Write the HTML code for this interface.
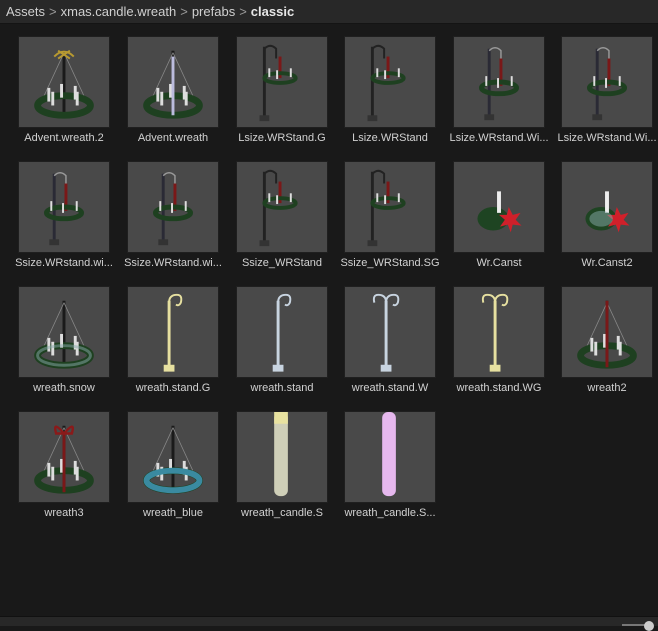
<!DOCTYPE html>
<html><head><meta charset="utf-8"><style>
*{margin:0;padding:0;box-sizing:border-box}
body{width:658px;height:626px;background:#191919;overflow:hidden;position:relative;font-family:"Liberation Sans",sans-serif}
.bar{position:absolute;left:0;top:0;width:658px;height:24px;background:#282828;border-bottom:1px solid #141414;color:#d0d0d0;font-size:13px;line-height:23px;padding-left:6px;white-space:nowrap}
.bar .s{color:#9a9a9a;margin:0 4px}
.bar b{color:#e6e6e6}
.it{position:absolute;width:92px}
.th{width:92px;height:92px;background:#494949;border:1px solid #1f1f1f;display:block}
.lb{position:absolute;top:96px;left:-10px;width:112px;text-align:center;color:#d2d2d2;font-size:11px;white-space:nowrap}
.bot{position:absolute;left:0;top:616px;width:658px;height:10px;background:#282828;border-top:1px solid #111}
</style></head><body>
<div class="bar">Assets<span class="s">&gt;</span>xmas.candle.wreath<span class="s">&gt;</span>prefabs<span class="s">&gt;</span><b>classic</b></div>

<svg width="0" height="0" style="position:absolute"><defs>
<g id="wr"><line x1="46" y1="14" x2="46" y2="82" stroke="#1a1a1a" stroke-width="3"/><line x1="46" y1="16" x2="22" y2="68" stroke="#888" stroke-width="0.8"/><line x1="46" y1="16" x2="70" y2="68" stroke="#888" stroke-width="0.8"/><ellipse cx="46" cy="70" rx="27" ry="10" fill="none" stroke="#1e4020" stroke-width="7"/><rect x="29" y="52" width="3" height="14" fill="#ddd"/><rect x="33" y="56" width="3" height="14" fill="#ddd"/><rect x="56" y="50" width="3" height="14" fill="#ddd"/><rect x="58" y="56" width="3" height="14" fill="#ddd"/><rect x="42" y="48" width="3" height="14" fill="#ddd"/></g>
<g id="ls"><line x1="28" y1="10" x2="28" y2="84" stroke="#222" stroke-width="3"/><path d="M28 12 q6 -6 12 0 v10" fill="none" stroke="#222" stroke-width="2"/><rect x="23" y="80" width="10" height="6" fill="#333"/><line x1="44" y1="20" x2="44" y2="42" stroke="#7a1818" stroke-width="3"/><ellipse cx="44" cy="42" rx="16" ry="5" fill="none" stroke="#1e4020" stroke-width="4"/><rect x="32" y="32" width="2" height="9" fill="#ddd"/><rect x="54" y="32" width="2" height="9" fill="#ddd"/><rect x="40" y="34" width="2" height="9" fill="#ddd"/></g>
<g id="ss"><line x1="36" y1="12" x2="36" y2="82" stroke="#2a2a35" stroke-width="3"/><path d="M36 14 q6 -6 12 0 v10" fill="none" stroke="#999" stroke-width="1.5"/><rect x="31" y="79" width="10" height="6" fill="#333"/><line x1="48" y1="22" x2="48" y2="50" stroke="#7a1818" stroke-width="3"/><ellipse cx="46" cy="52" rx="18" ry="6" fill="none" stroke="#1e4020" stroke-width="5"/><rect x="32" y="40" width="2" height="10" fill="#ddd"/><rect x="58" y="40" width="2" height="10" fill="#ddd"/><rect x="44" y="42" width="2" height="10" fill="#ddd"/></g>
<g id="cs"><ellipse cx="40" cy="58" rx="16" ry="12" fill="#1e4422"/><rect x="44" y="30" width="4" height="22" fill="#eee"/><path d="M56 46 l4 8 8 -2 -5 7 6 6 -9 -1 -2 8 -3 -8 -8 2 5 -7 -6 -5 8 0z" fill="#d0202a"/></g>
<g id="st"><line x1="42" y1="14" x2="42" y2="84" stroke-width="3"/><path d="M42 16 q0 -8 8 -8 q6 0 4 8 q-2 4 -5 2" fill="none" stroke-width="2"/><rect x="37" y="80" width="10" height="6"/></g>
</defs></svg>

<div class="it" style="left:18px;top:36px"><svg class="th" viewBox="0 0 92 92"><use href="#wr"/><path d="M36 20 q10 -10 20 0 M40 14 l12 8 M52 14 l-12 8" stroke="#b89a30" fill="none" stroke-width="2"/></svg><div class="lb">Advent.wreath.2</div></div>
<div class="it" style="left:127px;top:36px"><svg class="th" viewBox="0 0 92 92"><use href="#wr"/><line x1="46" y1="20" x2="46" y2="80" stroke="#bbd" stroke-width="3"/></svg><div class="lb">Advent.wreath</div></div>
<div class="it" style="left:236px;top:36px"><svg class="th" viewBox="0 0 92 92"><use href="#ls"/></svg><div class="lb">Lsize.WRStand.G</div></div>
<div class="it" style="left:344px;top:36px"><svg class="th" viewBox="0 0 92 92"><use href="#ls"/></svg><div class="lb">Lsize.WRStand</div></div>
<div class="it" style="left:453px;top:36px"><svg class="th" viewBox="0 0 92 92"><use href="#ss"/></svg><div class="lb">Lsize.WRstand.Wi...</div></div>
<div class="it" style="left:561px;top:36px"><svg class="th" viewBox="0 0 92 92"><use href="#ss"/></svg><div class="lb">Lsize.WRstand.Wi...</div></div>

<div class="it" style="left:18px;top:161px"><svg class="th" viewBox="0 0 92 92"><use href="#ss"/></svg><div class="lb">Ssize.WRstand.wi...</div></div>
<div class="it" style="left:127px;top:161px"><svg class="th" viewBox="0 0 92 92"><use href="#ss"/></svg><div class="lb">Ssize.WRstand.wi...</div></div>
<div class="it" style="left:236px;top:161px"><svg class="th" viewBox="0 0 92 92"><use href="#ls"/></svg><div class="lb">Ssize_WRStand</div></div>
<div class="it" style="left:344px;top:161px"><svg class="th" viewBox="0 0 92 92"><use href="#ls"/></svg><div class="lb">Ssize_WRStand.SG</div></div>
<div class="it" style="left:453px;top:161px"><svg class="th" viewBox="0 0 92 92"><use href="#cs"/></svg><div class="lb">Wr.Canst</div></div>
<div class="it" style="left:561px;top:161px"><svg class="th" viewBox="0 0 92 92"><use href="#cs"/><ellipse cx="40" cy="58" rx="12" ry="8" fill="#8aa" opacity=".5"/></svg><div class="lb">Wr.Canst2</div></div>

<div class="it" style="left:18px;top:286px"><svg class="th" viewBox="0 0 92 92"><use href="#wr"/><ellipse cx="46" cy="70" rx="27" ry="10" fill="none" stroke="#8aa" stroke-width="3" opacity=".5"/></svg><div class="lb">wreath.snow</div></div>
<div class="it" style="left:127px;top:286px"><svg class="th" viewBox="0 0 92 92"><use href="#st" stroke="#e6e0a0" fill="#e6e0a0"/></svg><div class="lb">wreath.stand.G</div></div>
<div class="it" style="left:236px;top:286px"><svg class="th" viewBox="0 0 92 92"><use href="#st" stroke="#c8d4e0" fill="#c8d4e0"/></svg><div class="lb">wreath.stand</div></div>
<div class="it" style="left:344px;top:286px"><svg class="th" viewBox="0 0 92 92"><use href="#st" stroke="#c8d4e0" fill="#c8d4e0"/><path d="M42 16 q0 -8 -8 -8 q-6 0 -4 8" fill="none" stroke="#c8d4e0" stroke-width="2"/></svg><div class="lb">wreath.stand.W</div></div>
<div class="it" style="left:453px;top:286px"><svg class="th" viewBox="0 0 92 92"><use href="#st" stroke="#e6e0a0" fill="#e6e0a0"/><path d="M42 16 q0 -8 -8 -8 q-6 0 -4 8" fill="none" stroke="#e6e0a0" stroke-width="2"/></svg><div class="lb">wreath.stand.WG</div></div>
<div class="it" style="left:561px;top:286px"><svg class="th" viewBox="0 0 92 92"><use href="#wr"/><line x1="46" y1="14" x2="46" y2="82" stroke="#7a1818" stroke-width="3"/></svg><div class="lb">wreath2</div></div>

<div class="it" style="left:18px;top:411px"><svg class="th" viewBox="0 0 92 92"><use href="#wr"/><line x1="46" y1="20" x2="46" y2="82" stroke="#7a1818" stroke-width="3"/><path d="M46 22 q-12 -14 -8 0 z M46 22 q12 -14 8 0 z" fill="none" stroke="#8a1a1a" stroke-width="2.5"/></svg><div class="lb">wreath3</div></div>
<div class="it" style="left:127px;top:411px"><svg class="th" viewBox="0 0 92 92"><use href="#wr"/><ellipse cx="46" cy="70" rx="27" ry="10" fill="none" stroke="#3a8aa0" stroke-width="6"/></svg><div class="lb">wreath_blue</div></div>
<div class="it" style="left:236px;top:411px"><svg class="th" viewBox="0 0 92 92"><rect x="38" y="0" width="14" height="86" rx="6" fill="#cfcfb8"/><rect x="38" y="0" width="14" height="12" fill="#e8e2a0"/></svg><div class="lb">wreath_candle.S</div></div>
<div class="it" style="left:344px;top:411px"><svg class="th" viewBox="0 0 92 92"><rect x="38" y="0" width="14" height="86" rx="6" fill="#e6b8ee"/></svg><div class="lb">wreath_candle.S...</div></div>

<div class="bot"><div style="position:absolute;right:12px;top:7px;width:24px;height:2px;background:#777"></div><div style="position:absolute;right:4px;top:4px;width:10px;height:10px;border-radius:50%;background:#ccc"></div></div>
</body></html>
